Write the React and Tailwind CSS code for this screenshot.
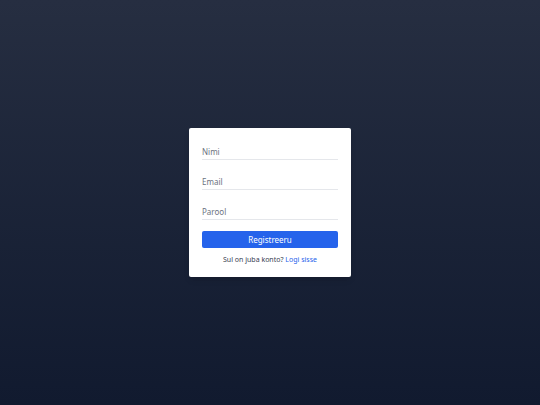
export default function App() {
  return (
    <div
      className="w-[540px] h-[405px] flex items-center justify-center bg-gradient-to-b from-[#262e41] to-[#111a2f]"
      style={{ fontFamily: '"Noto Sans", "Open Sans", sans-serif' }}
    >
      <div className="w-[162px] bg-white rounded-[2px] shadow-md px-[13px] pt-[16px] pb-[12px] flex flex-col">
        <div className="flex flex-col gap-[14px]">
          {["Nimi", "Email", "Parool"].map((p) => (
            <div key={p} className="h-[16px] border-b border-[#e5e7eb] flex items-center">
              <span className="text-[8px] text-[#6b7280] leading-none">{p}</span>
            </div>
          ))}
        </div>
        <button className="mt-[11px] h-[17px] w-full rounded-[2px] bg-[#2563eb] text-white text-[8px] leading-none">
          Registreeru
        </button>
        <p className="mt-[7px] text-center text-[7px] leading-[10px] text-[#374151]">
          Sul on juba konto? <span className="text-[#2563eb]">Logi sisse</span>
        </p>
      </div>
    </div>
  );
}
